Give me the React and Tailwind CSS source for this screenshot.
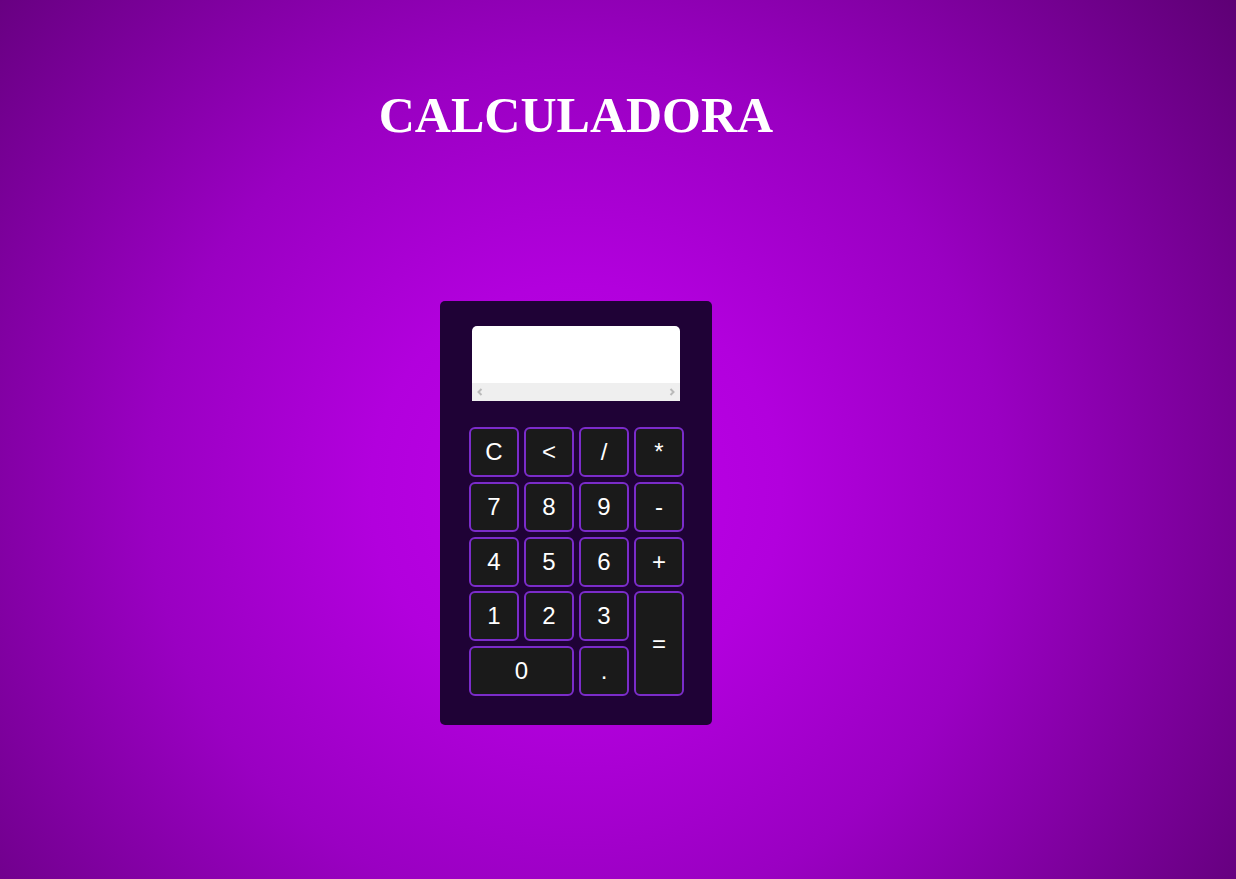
const keys = [
  { label: "C" },
  { label: "<" },
  { label: "/" },
  { label: "*" },
  { label: "7" },
  { label: "8" },
  { label: "9" },
  { label: "-" },
  { label: "4" },
  { label: "5" },
  { label: "6" },
  { label: "+" },
  { label: "1" },
  { label: "2" },
  { label: "3" },
  { label: "=", cls: "row-span-2" },
  { label: "0", cls: "col-span-2" },
  { label: "." },
];

const App = () => {
  return (
    <div className="min-h-screen w-full bg-[radial-gradient(circle_at_576px_490px,#bd00e8_0%,#b200dd_25%,#9a00c2_52%,#5e0075_100%)] font-['Liberation_Sans',Arial,sans-serif]">
      <div className="w-[1152px] flex flex-col items-center pt-[87px]">
        <h1 className="text-white font-bold text-[50px] leading-[57px] font-['Liberation_Serif','Times_New_Roman',serif]">
          CALCULADORA
        </h1>

        <div className="mt-[157px] w-[272px] h-[424px] bg-[#1f0236] rounded-[5px] pt-[25px] pl-[29px]">
          <div className="ml-[3px] w-[208px] h-[75px] bg-white rounded-t-[5px] flex flex-col justify-end overflow-hidden">
            <div className="h-[18px] bg-[#efefef] flex items-center justify-between px-[4px] text-[#bababa]">
              <svg width="8" height="8" viewBox="0 0 8 8">
                <path d="M5.5 1 L2.5 4 L5.5 7" stroke="currentColor" strokeWidth="2" fill="none" />
              </svg>
              <svg width="8" height="8" viewBox="0 0 8 8">
                <path d="M2.5 1 L5.5 4 L2.5 7" stroke="currentColor" strokeWidth="2" fill="none" />
              </svg>
            </div>
          </div>

          <div className="mt-[26px] grid grid-cols-[repeat(4,50px)] auto-rows-[50px] gap-x-[5px] gap-y-[4.75px]">
            {keys.map((k) => (
              <button
                key={k.label}
                className={`${k.cls || ""} bg-[#1a1a1a] border-2 border-[#7b2cca] rounded-[6px] text-white text-[24px] flex items-center justify-center`}
              >
                {k.label}
              </button>
            ))}
          </div>
        </div>
      </div>
    </div>
  );
};

export default App;
